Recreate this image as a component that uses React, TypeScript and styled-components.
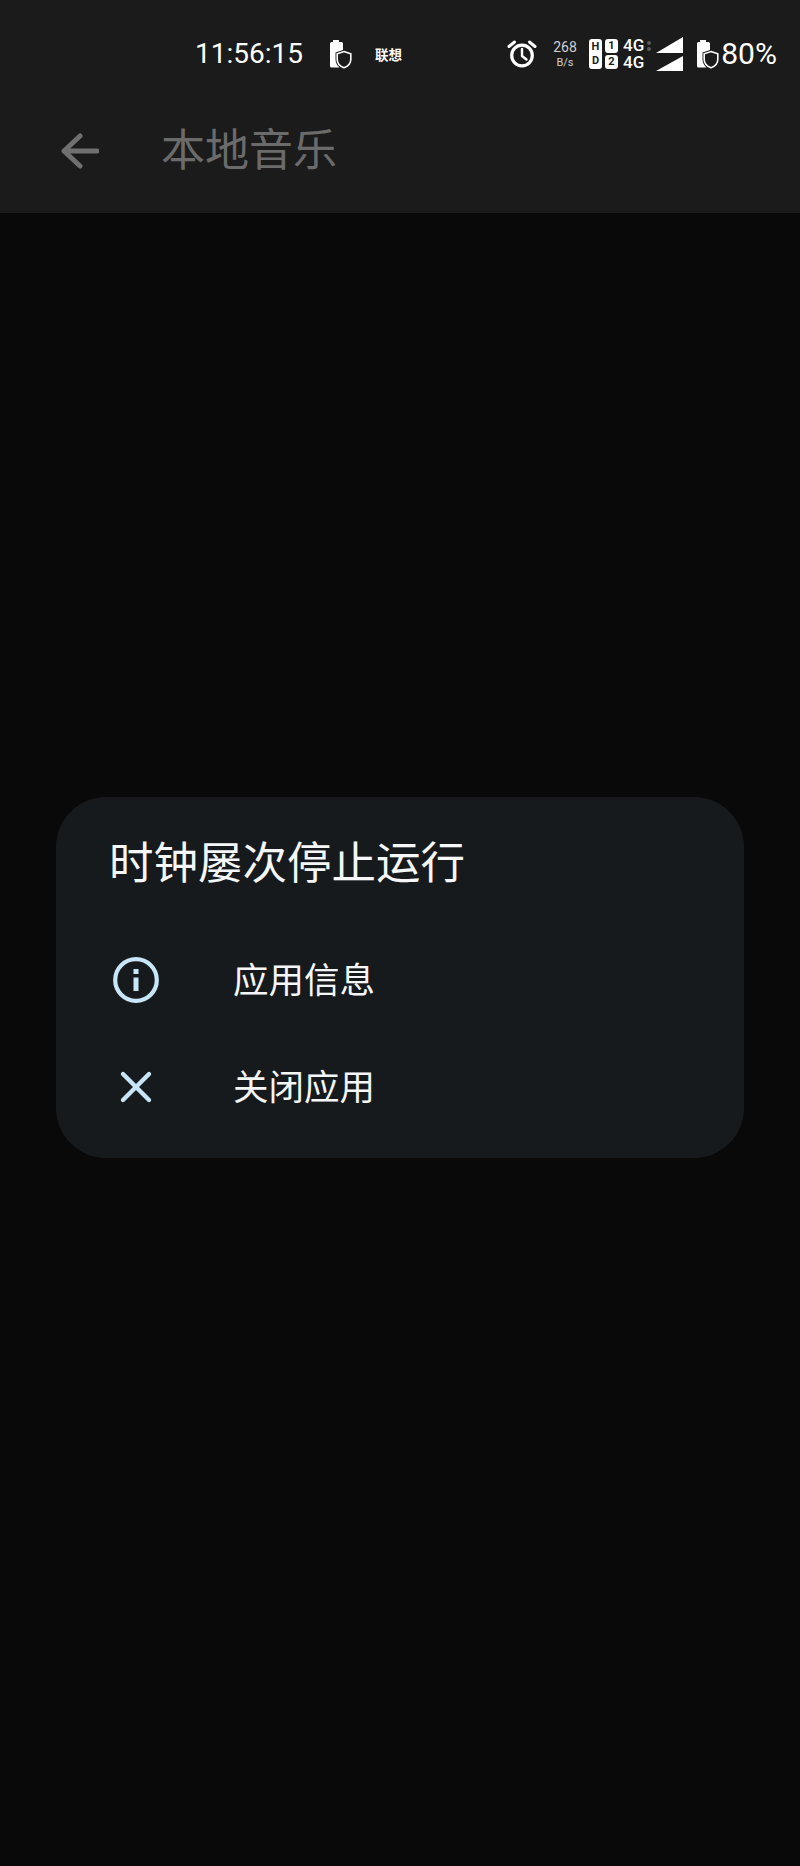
import React from 'react';
import styled, { createGlobalStyle } from 'styled-components';

const GlobalStyle = createGlobalStyle`
  html, body {
    margin: 0;
    padding: 0;
    background: #090a0a;
  }
  body {
    font-family: Roboto, "Noto Sans CJK SC", sans-serif;
  }
  * {
    box-sizing: border-box;
  }
`;

const BatteryShield: React.FC = () => (
  <BatteryIcon width="23" height="29" viewBox="0 0 23 29">
    <path d="M4 0h6v2h2.500A1.500 1.500 0 0 1 14 3.500V10l-7.500 2.500v6.500c0 3.500 1.500 6.500 4 8.500h-8A1.500 1.500 0 0 1 1 26V3.500A1.500 1.500 0 0 1 2.500 2H4z" fill="#fff" />
    <path d="M15 11.500l6.800 2.300v5.700c0 3.800-2.700 6.700-6.800 8.300-4.100-1.600-6.800-4.500-6.800-8.300v-5.700z" fill="none" stroke="#fff" strokeWidth="1.600" />
  </BatteryIcon>
);

const AlarmClock: React.FC = () => (
  <AlarmIcon width="30" height="28" viewBox="0 0 30 28" fill="none" stroke="#fff">
    <circle cx="15" cy="15.500" r="10.300" strokeWidth="3.200" />
    <path d="M15 9v7l4.500 3.500" strokeWidth="2.400" strokeLinecap="round" strokeLinejoin="round" />
    <path d="M2 6.500L7.500 2M28 6.500L22.500 2" strokeWidth="3" strokeLinecap="round" />
  </AlarmIcon>
);

const Signal: React.FC = () => (
  <SignalIcon width="28" height="34" viewBox="0 0 28 34">
    <path d="M27 0v16H0z" fill="#fff" />
    <path d="M27 19v15H0z" fill="#fff" />
  </SignalIcon>
);

const BackArrow: React.FC = () => (
  <BackIcon width="38" height="36" viewBox="0 0 38 36" fill="none" stroke="#707070" strokeWidth="5" strokeLinecap="round" strokeLinejoin="round">
    <path d="M19 3L3 18l16 15M3 18h33" />
  </BackIcon>
);

const InfoIcon: React.FC = () => (
  <svg width="46" height="46" viewBox="0 0 46 46" fill="none" stroke="#c8e6f8">
    <circle cx="23" cy="23" r="20.800" strokeWidth="4.200" />
    <path d="M23 20.500v13.500" strokeWidth="5" />
    <path d="M23 12v5" strokeWidth="5" />
  </svg>
);

const CloseIcon: React.FC = () => (
  <svg width="46" height="46" viewBox="0 0 46 46" fill="none" stroke="#c8e6f8" strokeWidth="4.400" strokeLinecap="round">
    <path d="M10 10l26 26M36 10L10 36" />
  </svg>
);

const App: React.FC = () => {
  return (
    <Page>
      <GlobalStyle />
      <Header>
        <StatusBar>
          <Clock>11:56:15</Clock>
          <BatteryShield />
          <Carrier>联想</Carrier>
          <StatusRight>
            <AlarmClock />
            <NetSpeed>
              <span>268</span>
              <small>B/s</small>
            </NetSpeed>
            <HdBadges>
              <TallBadge>
                <span>H</span>
                <span>D</span>
              </TallBadge>
              <SlotBadges>
                <SlotBadge>1</SlotBadge>
                <SlotBadge>2</SlotBadge>
              </SlotBadges>
            </HdBadges>
            <NetType>
              <span>4G</span>
              <span>4G</span>
            </NetType>
            <ArrowDots>
              <i />
              <i />
            </ArrowDots>
            <Signal />
            <BatteryShield />
            <Percent>80%</Percent>
          </StatusRight>
        </StatusBar>
        <Toolbar>
          <BackArrow />
          <ToolbarTitle>本地音乐</ToolbarTitle>
        </Toolbar>
      </Header>
      <Scrim>
        <Dialog>
          <DialogTitle>时钟屡次停止运行</DialogTitle>
          <DialogRow>
            <RowIcon>
              <InfoIcon />
            </RowIcon>
            <RowLabel>应用信息</RowLabel>
          </DialogRow>
          <DialogRow>
            <RowIcon>
              <CloseIcon />
            </RowIcon>
            <RowLabel>关闭应用</RowLabel>
          </DialogRow>
        </Dialog>
      </Scrim>
    </Page>
  );
};

const Page = styled.div`
  width: 800px;
  height: 1866px;
  display: flex;
  flex-direction: column;
  background: #090909;
  overflow: hidden;
`;

const Header = styled.header`
  height: 213px;
  background: #1b1b1b;
  flex-shrink: 0;
`;

const StatusBar = styled.div`
  height: 108px;
  display: flex;
  align-items: center;
  padding-left: 195px;
  color: #fff;
`;

const Clock = styled.span`
  font-size: 28px;
  line-height: 34px;
  width: 134px;
  font-weight: 400;
`;

const BatteryIcon = styled.svg`
  flex-shrink: 0;
`;

const Carrier = styled.span`
  margin-left: 23px;
  font-family: "Noto Sans CJK SC", sans-serif;
  font-size: 13.5px;
  font-weight: 700;
  line-height: 16px;
`;

const StatusRight = styled.div`
  display: flex;
  align-items: center;
  margin-left: 105px;
`;

const AlarmIcon = styled.svg`
  flex-shrink: 0;
`;

const NetSpeed = styled.div`
  width: 26px;
  margin-left: 15px;
  display: flex;
  flex-direction: column;
  align-items: center;
  color: #d0d0d0;
  font-size: 14px;
  line-height: 16px;
  small {
    font-size: 11px;
    line-height: 15px;
  }
`;

const HdBadges = styled.div`
  display: flex;
  gap: 3px;
  margin-left: 11px;
`;

const TallBadge = styled.div`
  width: 13px;
  height: 30px;
  padding: 1px 0;
  background: #fff;
  border-radius: 3px;
  color: #1b1b1b;
  font-size: 11px;
  font-weight: 700;
  line-height: 14px;
  text-align: center;
  span {
    display: block;
  }
`;

const SlotBadges = styled.div`
  display: flex;
  flex-direction: column;
  gap: 2px;
`;

const SlotBadge = styled.div`
  width: 13px;
  height: 14px;
  background: #fff;
  border-radius: 3px;
  color: #1b1b1b;
  font-size: 11px;
  font-weight: 700;
  line-height: 14px;
  text-align: center;
`;

const NetType = styled.div`
  margin-left: 5px;
  display: flex;
  flex-direction: column;
  font-size: 17px;
  font-weight: 500;
  line-height: 17px;
`;

const ArrowDots = styled.div`
  width: 4px;
  margin: 0 5px 16px 3px;
  display: flex;
  flex-direction: column;
  gap: 2px;
  i {
    display: block;
    width: 4px;
    height: 4px;
    border-radius: 50%;
    background: #5a5a5a;
  }
`;

const SignalIcon = styled.svg`
  flex-shrink: 0;
  margin-right: 12px;
`;

const Percent = styled.span`
  margin-left: 2px;
  font-size: 30px;
  font-weight: 400;
  line-height: 34px;
`;

const Toolbar = styled.div`
  height: 105px;
  display: flex;
  align-items: center;
  padding: 0 0 24px 61px;
`;

const BackIcon = styled.svg`
  flex-shrink: 0;
  margin-top: 4px;
`;

const ToolbarTitle = styled.div`
  margin: 0 0 4px 62px;
  font-family: "Noto Sans CJK SC", sans-serif;
  font-size: 44px;
  font-weight: 400;
  line-height: 60px;
  color: #6b6b6b;
`;

const Scrim = styled.main`
  flex: 1;
  padding: 584px 56px 0;
`;

const Dialog = styled.section`
  height: 361px;
  padding: 30px 0 0 53px;
  background: #171a1d;
  border-radius: 50px;
`;

const DialogTitle = styled.h2`
  margin: 0 0 31px;
  font-family: "Noto Sans CJK SC", sans-serif;
  font-size: 44.500px;
  font-weight: 400;
  line-height: 66px;
  color: #f4f6f8;
`;

const DialogRow = styled.div`
  height: 107px;
  display: flex;
  align-items: center;
`;

const RowIcon = styled.div`
  width: 46px;
  height: 46px;
  margin: 5px 74px 0 4px;
  svg {
    display: block;
  }
`;

const RowLabel = styled.span`
  font-family: "Noto Sans CJK SC", sans-serif;
  font-size: 35.500px;
  line-height: 50px;
  color: #f4f6f8;
`;

export default App;
